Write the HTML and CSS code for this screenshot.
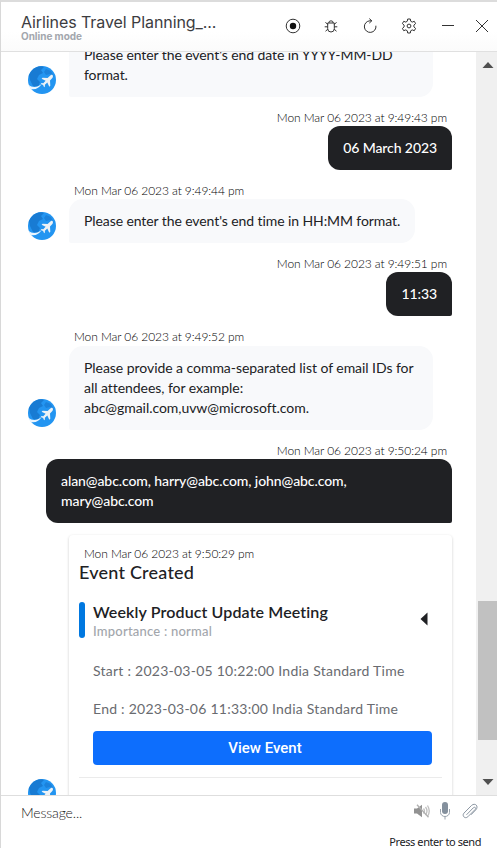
FILE: index.html
```html
<!DOCTYPE html>
<html lang="en">
<head>
<meta charset="utf-8">
<title>Airlines Travel Planning</title>
<link rel="stylesheet" href="styles.css">
</head>
<body>
<svg class="defs" aria-hidden="true">
  <symbol id="globe" viewBox="0 0 28 28">
    <circle cx="14" cy="14" r="14" fill="#2395f1"/>
    <path d="M3 5.500C7 .5 13-.5 16 1l-3 3 2 3-4 2-2 4 3 3-2 5-5-1-3-6-1-5z" fill="#187bd3"/>
    <path d="M18 3l5 2 3 6-4-3-4 1-2-3z" fill="#1b82dc"/>
    <path d="M.5 19c4 3 9 2.500 13-1-2 4-6 6-11 5z" fill="#e9f5ff"/>
    <path d="M24.500 9c-1-.5-2 .3-3 1.300l-1.900 1.800-5-.4-1 1 4 2.100-2.300 2.400-1.800-.1-.7.800 2.300 1.100 1 2.200.8-.7v-1.800l2.400-2.200 2 4.200 1-.9-.3-5.200 1.900-2c1-1.100 1.500-2.600.6-3.600z" fill="#edf2f6"/>
  </symbol>
</svg>
<div class="app">
  <header class="header">
    <div class="heading">
      <h1 class="title">Airlines Travel Planning_...</h1>
      <p class="mode">Online mode</p>
    </div>
    <div class="tools">
      <svg class="tool" viewBox="0 0 16 16"><circle cx="8" cy="8" r="6.800"/><circle cx="8" cy="8" r="3.200" fill="#111" stroke="none"/></svg>
      <svg class="tool" viewBox="0 0 16 16"><path d="M4.700 5h6.600v5.700a3.300 3.300 0 0 1-6.600 0zM5.800 5a2.200 2.200 0 0 1 4.400 0M4.700 6.500 2.500 4.200M11.300 6.500l2.200-2.300M4.700 8.800H1.700M11.300 8.800h3M4.800 11.200l-2.300 2M11.200 11.200l2.300 2"/></svg>
      <svg class="tool" viewBox="0 0 16 16"><path d="M8 2.800a5.800 5.800 0 1 0 5.900 4.900M8 2.800h1.800M7.300.6l2.500 2.200-2.500 2.300"/></svg>
      <svg class="tool" viewBox="0 0 16 16"><path d="M6.300 3.200 6.700 1h2.600l.4 2.200 1.500.9 2.100-.8 1.300 2.300-1.700 1.500v1.800l1.700 1.500-1.300 2.300-2.100-.8-1.500.9-.4 2.200H6.700l-.4-2.200-1.500-.9-2.100.8-1.300-2.300 1.700-1.500V7.100L1.400 5.600l1.300-2.300 2.100.8z"/><circle cx="8" cy="8" r="1.900"/></svg>
      <svg class="tool" viewBox="0 0 16 16"><path d="M2 7.500h12"/></svg>
      <svg class="tool close" viewBox="0 0 16 16"><path d="m2 2 12 12M14 2 2 14"/></svg>
    </div>
  </header>

  <div class="body">
    <main class="chat">
      <div class="row first">
        <svg class="avatar"><use href="#globe"/></svg>
        <div class="bubble bot wide">Please enter the event's end date in YYYY-MM-DD<br>format.</div>
      </div>
      <time class="time right">Mon Mar 06 2023 at 9:49:43 pm</time>
      <div class="row mine"><div class="bubble user">06 March 2023</div></div>
      <time class="time">Mon Mar 06 2023 at 9:49:44 pm</time>
      <div class="row">
        <svg class="avatar"><use href="#globe"/></svg>
        <div class="bubble bot medium">Please enter the event's end time in HH:MM format.</div>
      </div>
      <time class="time right">Mon Mar 06 2023 at 9:49:51 pm</time>
      <div class="row mine"><div class="bubble user">11:33</div></div>
      <time class="time late">Mon Mar 06 2023 at 9:49:52 pm</time>
      <div class="row">
        <svg class="avatar"><use href="#globe"/></svg>
        <div class="bubble bot wide loose">Please provide a comma-separated list of email IDs for<br>all attendees, for example:<br>abc@gmail.com,uvw@microsoft.com.</div>
      </div>
      <time class="time right">Mon Mar 06 2023 at 9:50:24 pm</time>
      <div class="row mine"><div class="bubble user full">alan@abc.com, harry@abc.com, john@abc.com,<br>mary@abc.com</div></div>
      <div class="row card-row">
        <svg class="avatar"><use href="#globe"/></svg>
        <section class="card">
          <time class="card-time">Mon Mar 06 2023 at 9:50:29 pm</time>
          <h2 class="card-title">Event Created</h2>
          <div class="event">
            <span class="accent"></span>
            <div class="event-text">
              <h3 class="event-name">Weekly Product Update Meeting</h3>
              <p class="importance">Importance : normal</p>
            </div>
            <svg class="caret" viewBox="0 0 8 14"><path d="M7.500.5v13L.5 7z"/></svg>
          </div>
          <p class="detail start">Start : 2023-03-05 10:22:00 India Standard Time</p>
          <p class="detail end">End : 2023-03-06 11:33:00 India Standard Time</p>
          <button class="view">View Event</button>
          <div class="rule"></div>
        </section>
      </div>
    </main>
    <div class="scrollbar">
      <svg class="arrow" viewBox="0 0 12 6"><path d="M.5 6 6 0l5.500 6z"/></svg>
      <div class="thumb"></div>
      <svg class="arrow" viewBox="0 0 12 6"><path d="M.5 0 6 6l5.500-6z"/></svg>
    </div>
  </div>

  <footer class="footer">
    <div class="compose">
      <span class="placeholder">Message...</span>
      <div class="actions">
        <svg class="mute" viewBox="0 0 16 14"><path d="M0 4.500h3L8 .8v12.400L3 9.500H0z" fill="#929292"/><path d="M9.500 4.500q2 2.500 0 5M11.500 3q3 4 0 8M13.500 1.500q3.500 5.500 0 11" fill="none" stroke="#c0c0c0" stroke-width="1.300"/><path d="m3 .8 11.500 12.400" stroke="#b0b0b0" stroke-width="1.300"/></svg>
        <svg class="mic" viewBox="0 0 10 18"><rect x="2" y="0" width="6" height="12" rx="3" fill="#84909d"/><path d="M.5 7v3.500a4.500 4 0 0 0 9 0V7M5 14.500V17.500" fill="none" stroke="#99a3ad"/></svg>
        <svg class="clip" viewBox="0 0 16 16"><path d="m4.500 11.800 6.800-7c1.500-1.400 3.200.2 1.800 1.700l-7.300 7.300c-2.700 2.500-6.200-.9-3.900-3.600l7.700-7.800c3.500-3 7.300.7 4.400 4.200L9 11.800" fill="none" stroke="#8b96a2"/></svg>
      </div>
    </div>
    <p class="hint">Press enter to send</p>
  </footer>
</div>
</body>
</html>
```

FILE: styles.css
```css
* { box-sizing: border-box; margin: 0; padding: 0; }
body { width: 497px; height: 848px; overflow: hidden; background: #fff; font-family: Lato, sans-serif; color: #202124; }
.defs { display: none; }
.app { height: 848px; display: flex; flex-direction: column; border-left: 1px solid #d8d8d8; border-top: 2px solid #dcdcdc; }

.header { height: 50px; flex: none; display: flex; justify-content: space-between; border-bottom: 1px solid #e0e0e0; padding: 10px 0 0 20px; background: linear-gradient(#fff 60%, #fbfbfb); }
.title { font: 400 16px/20px Inter, sans-serif; letter-spacing: -.08px; color: #3c3c3f; white-space: nowrap; }
.mode { font: 700 10px/12px Inter, sans-serif; letter-spacing: -.04px; color: #a3a7ad; margin-top: -2px; }
.tools { display: flex; gap: 22.800px; padding: 6px 7px 0 0; }
.tool { width: 16px; height: 16px; fill: none; stroke: #333; stroke-width: 1; }
.close { margin-left: -4.500px; }

.body { height: 743px; flex: none; display: flex; overflow: hidden; }
.chat { flex: 1; padding: 0 24px 0 27px; overflow: hidden; }
.row { display: flex; align-items: flex-end; }
.first { margin-top: -19px; }
.mine { justify-content: flex-end; }
.avatar { width: 28px; height: 28px; margin: 0 13px 3px 0; flex: none; }
.bubble { padding: 12px 15px; font-size: 14px; line-height: 20px; letter-spacing: -.09px; white-space: nowrap; }
.bot { background: #f8f9fb; border-radius: 14px 14px 14px 2px; }
.user { background: #202124; color: #fff; border-radius: 12px 12px 2px 12px; font-weight: 500; }
.wide { width: 364px; }
.loose { letter-spacing: -.05px; }
.medium { width: 346px; }
.full { width: 406px; }
.time { display: block; height: 29px; padding: 13px 5px 0 46px; font-size: 12px; line-height: 16px; font-weight: 300; letter-spacing: -.08px; color: #000; white-space: nowrap; }
.right { text-align: right; }
.late { height: 30px; }

.card-row { margin-top: 12px; }
.card { width: 383px; height: 275px; flex: none; padding: 11px 10px 0; border-radius: 4px; box-shadow: 0 1px 3px rgba(0, 0, 0, .2); }
.card-time { display: block; padding-left: 5px; font-size: 12px; line-height: 16px; font-weight: 300; letter-spacing: -.08px; color: #000; }
.card-title { font-size: 18px; line-height: 20px; font-weight: 500; letter-spacing: .22px; }
.event { display: flex; height: 36px; margin-top: 20px; }
.accent { width: 6px; border-radius: 3px; background: #0078e0; }
.event-text { margin-left: 8px; flex: 1; }
.event-name { font-size: 16px; line-height: 20px; font-weight: 600; letter-spacing: .12px; }
.importance { font-size: 13px; line-height: 18px; font-weight: 500; letter-spacing: .22px; color: #a2a6ac; }
.caret { width: 8px; height: 14px; margin: 10px 14px 0 0; fill: #202124; }
.detail { margin-left: 14px; font-size: 14px; line-height: 20px; letter-spacing: .25px; color: #696b70; white-space: nowrap; }
.start { margin-top: 23px; }
.end { margin-top: 18px; }
.view { display: block; width: 339px; height: 34px; margin: 12px 0 0 14px; padding-left: 5px; border: 0; border-radius: 4px; background: #0d6efd; color: #fff; font: 500 15px/34px Roboto, sans-serif; }
.rule { height: 1px; margin-top: 12px; background: #ebebeb; }

.scrollbar { width: 21px; padding: 10px 0 10px; background: #f0f0f0; display: flex; flex-direction: column; justify-content: space-between; }
.arrow { width: 12px; height: 6px; margin-left: 6px; fill: #505050; }
.thumb { height: 139px; margin: 533px 0 0 2px; background: #c1c1c1; flex: none; }
.scrollbar .arrow:last-child { margin-top: auto; }

.footer { flex: 1; border-top: 1px solid #dedede; padding: 6px 16px 0 20px; }
.compose { display: flex; justify-content: space-between; }
.placeholder { font-size: 14px; line-height: 22px; font-weight: 300; letter-spacing: -.15px; color: #222; }
.actions { display: flex; align-items: flex-start; padding-right: 3px; }
.mute { width: 16px; height: 14px; margin: 2px 10px 0 0; }
.mic { width: 10px; height: 18px; margin-right: 12px; }
.clip { width: 16px; height: 16px; margin-top: 1px; }
.hint { font: 400 11px/15px "Noto Sans", sans-serif; letter-spacing: -.42px; text-align: right; margin-top: 10px; }
```
